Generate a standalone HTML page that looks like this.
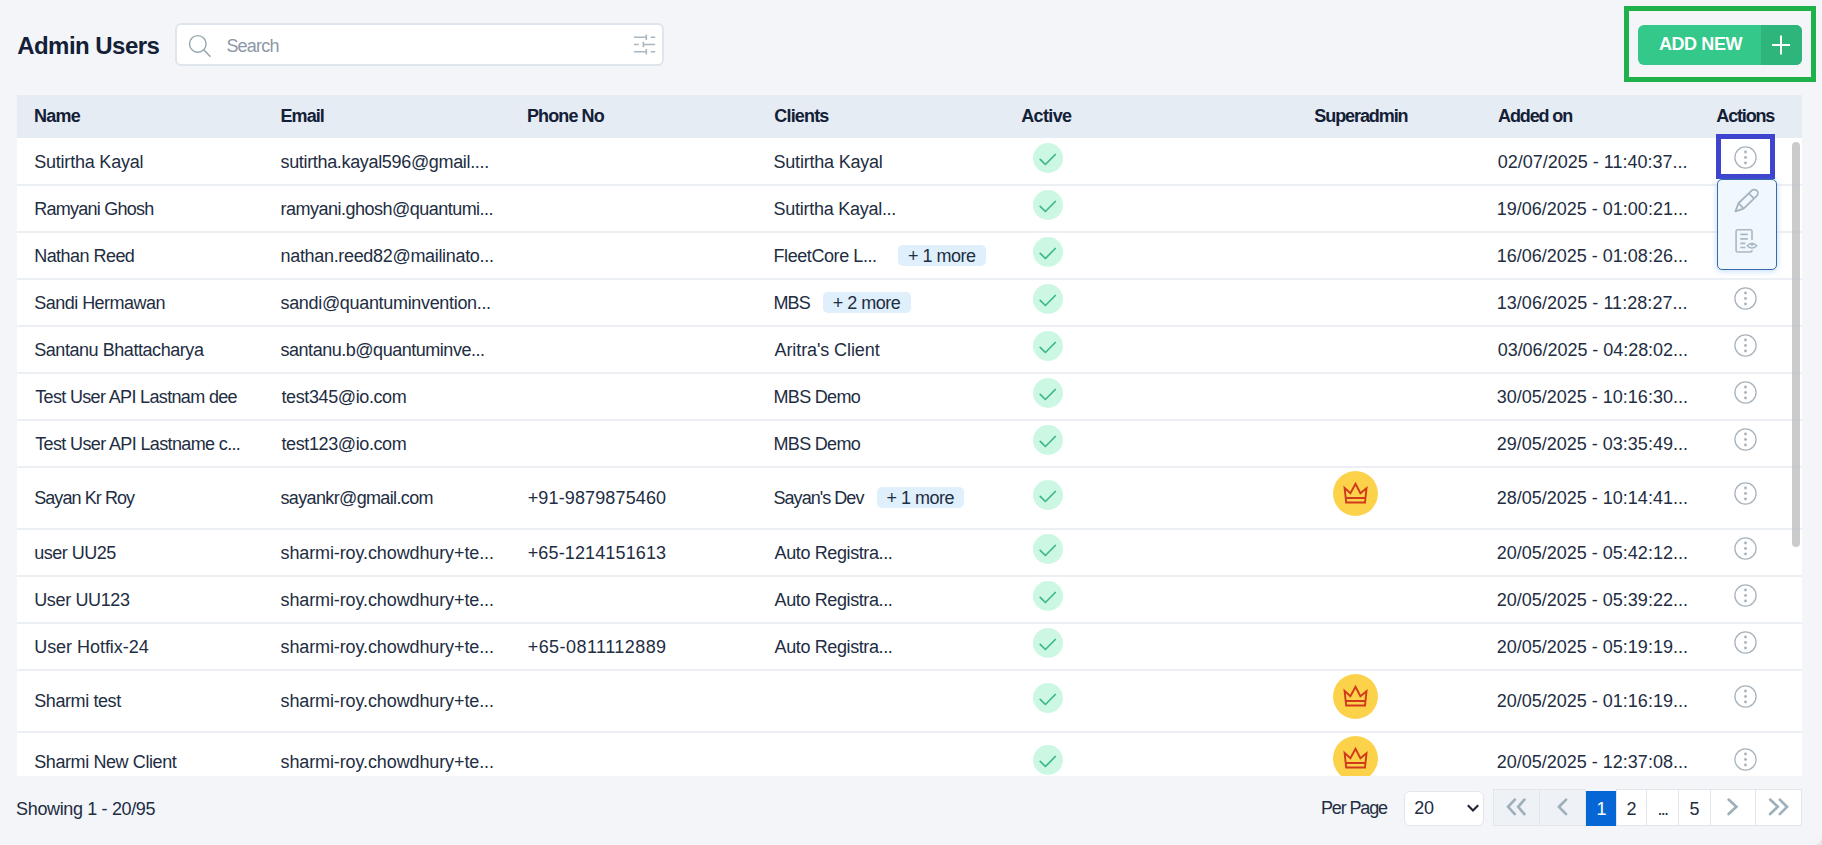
<!DOCTYPE html>
<html><head><meta charset="utf-8"><title>Admin Users</title>
<style>
html,body{margin:0;padding:0;width:1822px;height:845px;overflow:hidden;background:#f3f5f9;font-family:'Liberation Sans',sans-serif;}
.t{position:absolute;white-space:pre;line-height:30px;}
.abs{position:absolute;}
.search{position:absolute;left:175px;top:23px;width:489px;height:43px;box-sizing:border-box;border:2px solid #dfe5ec;border-radius:6px;background:#fff;}
.btn{position:absolute;left:1638px;top:24.5px;width:164px;height:40px;border-radius:6px;background:#34c88a;overflow:hidden;}
.btn .plus{position:absolute;right:0;top:0;width:41px;height:40px;background:#2db57b;}
.hl-green{position:absolute;left:1624px;top:6px;width:182px;height:66px;border:5px solid #1fb24a;}
.thead{position:absolute;left:17px;top:95px;width:1785px;height:43px;background:#e5ecf4;}
.tbody{position:absolute;left:17px;top:138px;width:1785px;height:638px;background:#fff;}
.rb{position:absolute;left:17px;width:1785px;height:2px;background:rgba(179,195,215,0.25);}
.chk{position:absolute;width:30px;height:30px;border-radius:50%;background:#ccf7e3;}
.chk svg,.crown svg,.kebab svg{position:absolute;left:0;top:0;}
.crown{position:absolute;width:45px;height:45px;border-radius:50%;background:#fdd24b;}
.kebab{position:absolute;width:23px;height:23px;}
.badge{position:absolute;background:#dff0fc;border-radius:5px;}
.scroll{position:absolute;left:1792px;top:141.5px;width:8px;height:405px;border-radius:4px;background:#cbcbcb;}
.hl-blue{position:absolute;left:1716px;top:134px;width:49px;height:35px;border:5px solid #3e44cd;}
.dd{position:absolute;left:1717px;top:178.5px;width:58px;height:89.5px;border:1.3px solid #3769ab;border-radius:5px;background:#f0f7fd;box-shadow:0 1px 6px rgba(80,150,240,0.35);}
.sel{position:absolute;left:1404px;top:791px;width:78px;height:33px;border:1px solid #e2e7ed;border-radius:6px;background:#fff;}
.pg{position:absolute;top:789px;height:37px;border:1px solid #e1e6ea;box-sizing:border-box;background:#fff;}
.pg.dis{background:#eef2f6;}
.pg.act{background:#0766d6;border-color:#0766d6;top:790.5px;height:35px;}

</style></head><body>
<div class="search"></div>
<svg class="abs" style="left:185px;top:31px" width="30" height="30" viewBox="0 0 30 30"><circle cx="12.8" cy="12.9" r="8.3" fill="none" stroke="#93a5ae" stroke-width="1.4"/><path d="M18.9 19 L25 25.3" stroke="#93a5ae" stroke-width="1.6" stroke-linecap="round"/></svg>
<svg class="abs" style="left:630px;top:30px" width="30" height="30" viewBox="0 0 30 30"><g stroke="#a8b7c1" stroke-width="1.6" fill="none"><path d="M4 7.2 H16.5 M20.7 7.2 H25.2 M16.3 4.5 V10"/><path d="M4 14.5 H8.7 M14 14.5 H25.2 M13.4 11.8 V17.3"/><path d="M4 21.8 H16.5 M20.7 21.8 H25.2 M16.3 19 V24.6"/></g></svg>
<div class="hl-green"></div>
<div class="btn"><div class="plus"></div></div>
<svg class="abs" style="left:1770px;top:34px" width="22" height="22" viewBox="0 0 22 22"><path d="M11 1.5 V20.5 M2 11 H20" stroke="#fff" stroke-width="2"/></svg>
<div class="thead"></div>
<div class="tbody"></div>
<div class="scroll"></div>

<div style="position:absolute;left:0;top:0;width:1822px;height:776px;overflow:hidden"><div class="chk" style="left:1033px;top:142.80px"><svg width="30" height="30" viewBox="0 0 30 30"><path d="M7.2 16.3 L12.4 21.5 L22.3 11.5" fill="none" stroke="#3bb984" stroke-width="1.7" stroke-linecap="round" stroke-linejoin="round"/></svg></div><div class="kebab" style="left:1734px;top:145.60px"><svg width="23" height="23" viewBox="0 0 23 23"><circle cx="11.5" cy="11.5" r="10.6" fill="none" stroke="#a9b4bd" stroke-width="1.3"/><circle cx="11.5" cy="6" r="1.45" fill="#a9b4bd"/><circle cx="11.5" cy="11.5" r="1.45" fill="#a9b4bd"/><circle cx="11.5" cy="17" r="1.45" fill="#a9b4bd"/></svg></div><div class="chk" style="left:1033px;top:190.27px"><svg width="30" height="30" viewBox="0 0 30 30"><path d="M7.2 16.3 L12.4 21.5 L22.3 11.5" fill="none" stroke="#3bb984" stroke-width="1.7" stroke-linecap="round" stroke-linejoin="round"/></svg></div><div class="badge" style="left:898px;top:244.90px;width:88px;height:21px"></div><div class="chk" style="left:1033px;top:237.20px"><svg width="30" height="30" viewBox="0 0 30 30"><path d="M7.2 16.3 L12.4 21.5 L22.3 11.5" fill="none" stroke="#3bb984" stroke-width="1.7" stroke-linecap="round" stroke-linejoin="round"/></svg></div><div class="badge" style="left:823.2px;top:291.83px;width:87.69999999999993px;height:21px"></div><div class="chk" style="left:1033px;top:284.13px"><svg width="30" height="30" viewBox="0 0 30 30"><path d="M7.2 16.3 L12.4 21.5 L22.3 11.5" fill="none" stroke="#3bb984" stroke-width="1.7" stroke-linecap="round" stroke-linejoin="round"/></svg></div><div class="kebab" style="left:1734px;top:286.93px"><svg width="23" height="23" viewBox="0 0 23 23"><circle cx="11.5" cy="11.5" r="10.6" fill="none" stroke="#a9b4bd" stroke-width="1.3"/><circle cx="11.5" cy="6" r="1.45" fill="#a9b4bd"/><circle cx="11.5" cy="11.5" r="1.45" fill="#a9b4bd"/><circle cx="11.5" cy="17" r="1.45" fill="#a9b4bd"/></svg></div><div class="chk" style="left:1033px;top:331.06px"><svg width="30" height="30" viewBox="0 0 30 30"><path d="M7.2 16.3 L12.4 21.5 L22.3 11.5" fill="none" stroke="#3bb984" stroke-width="1.7" stroke-linecap="round" stroke-linejoin="round"/></svg></div><div class="kebab" style="left:1734px;top:333.86px"><svg width="23" height="23" viewBox="0 0 23 23"><circle cx="11.5" cy="11.5" r="10.6" fill="none" stroke="#a9b4bd" stroke-width="1.3"/><circle cx="11.5" cy="6" r="1.45" fill="#a9b4bd"/><circle cx="11.5" cy="11.5" r="1.45" fill="#a9b4bd"/><circle cx="11.5" cy="17" r="1.45" fill="#a9b4bd"/></svg></div><div class="chk" style="left:1033px;top:377.99px"><svg width="30" height="30" viewBox="0 0 30 30"><path d="M7.2 16.3 L12.4 21.5 L22.3 11.5" fill="none" stroke="#3bb984" stroke-width="1.7" stroke-linecap="round" stroke-linejoin="round"/></svg></div><div class="kebab" style="left:1734px;top:380.79px"><svg width="23" height="23" viewBox="0 0 23 23"><circle cx="11.5" cy="11.5" r="10.6" fill="none" stroke="#a9b4bd" stroke-width="1.3"/><circle cx="11.5" cy="6" r="1.45" fill="#a9b4bd"/><circle cx="11.5" cy="11.5" r="1.45" fill="#a9b4bd"/><circle cx="11.5" cy="17" r="1.45" fill="#a9b4bd"/></svg></div><div class="chk" style="left:1033px;top:424.92px"><svg width="30" height="30" viewBox="0 0 30 30"><path d="M7.2 16.3 L12.4 21.5 L22.3 11.5" fill="none" stroke="#3bb984" stroke-width="1.7" stroke-linecap="round" stroke-linejoin="round"/></svg></div><div class="kebab" style="left:1734px;top:427.72px"><svg width="23" height="23" viewBox="0 0 23 23"><circle cx="11.5" cy="11.5" r="10.6" fill="none" stroke="#a9b4bd" stroke-width="1.3"/><circle cx="11.5" cy="6" r="1.45" fill="#a9b4bd"/><circle cx="11.5" cy="11.5" r="1.45" fill="#a9b4bd"/><circle cx="11.5" cy="17" r="1.45" fill="#a9b4bd"/></svg></div><div class="badge" style="left:877.3px;top:487.29px;width:87.10000000000002px;height:21px"></div><div class="chk" style="left:1033px;top:479.59px"><svg width="30" height="30" viewBox="0 0 30 30"><path d="M7.2 16.3 L12.4 21.5 L22.3 11.5" fill="none" stroke="#3bb984" stroke-width="1.7" stroke-linecap="round" stroke-linejoin="round"/></svg></div><div class="crown" style="left:1333px;top:471.09px"><svg width="45" height="45" viewBox="0 0 45 45"><path d="M11.6 17 L17.4 22.3 L22.5 12.7 L27.4 22.3 L33.5 17.3 L32 31.5 L13.2 31.5 Z M13 27 L32.3 27" fill="none" stroke="#d0391c" stroke-width="1.9" stroke-linejoin="miter"/></svg></div><div class="kebab" style="left:1734px;top:482.39px"><svg width="23" height="23" viewBox="0 0 23 23"><circle cx="11.5" cy="11.5" r="10.6" fill="none" stroke="#a9b4bd" stroke-width="1.3"/><circle cx="11.5" cy="6" r="1.45" fill="#a9b4bd"/><circle cx="11.5" cy="11.5" r="1.45" fill="#a9b4bd"/><circle cx="11.5" cy="17" r="1.45" fill="#a9b4bd"/></svg></div><div class="chk" style="left:1033px;top:534.26px"><svg width="30" height="30" viewBox="0 0 30 30"><path d="M7.2 16.3 L12.4 21.5 L22.3 11.5" fill="none" stroke="#3bb984" stroke-width="1.7" stroke-linecap="round" stroke-linejoin="round"/></svg></div><div class="kebab" style="left:1734px;top:537.06px"><svg width="23" height="23" viewBox="0 0 23 23"><circle cx="11.5" cy="11.5" r="10.6" fill="none" stroke="#a9b4bd" stroke-width="1.3"/><circle cx="11.5" cy="6" r="1.45" fill="#a9b4bd"/><circle cx="11.5" cy="11.5" r="1.45" fill="#a9b4bd"/><circle cx="11.5" cy="17" r="1.45" fill="#a9b4bd"/></svg></div><div class="chk" style="left:1033px;top:581.19px"><svg width="30" height="30" viewBox="0 0 30 30"><path d="M7.2 16.3 L12.4 21.5 L22.3 11.5" fill="none" stroke="#3bb984" stroke-width="1.7" stroke-linecap="round" stroke-linejoin="round"/></svg></div><div class="kebab" style="left:1734px;top:583.99px"><svg width="23" height="23" viewBox="0 0 23 23"><circle cx="11.5" cy="11.5" r="10.6" fill="none" stroke="#a9b4bd" stroke-width="1.3"/><circle cx="11.5" cy="6" r="1.45" fill="#a9b4bd"/><circle cx="11.5" cy="11.5" r="1.45" fill="#a9b4bd"/><circle cx="11.5" cy="17" r="1.45" fill="#a9b4bd"/></svg></div><div class="chk" style="left:1033px;top:628.12px"><svg width="30" height="30" viewBox="0 0 30 30"><path d="M7.2 16.3 L12.4 21.5 L22.3 11.5" fill="none" stroke="#3bb984" stroke-width="1.7" stroke-linecap="round" stroke-linejoin="round"/></svg></div><div class="kebab" style="left:1734px;top:630.92px"><svg width="23" height="23" viewBox="0 0 23 23"><circle cx="11.5" cy="11.5" r="10.6" fill="none" stroke="#a9b4bd" stroke-width="1.3"/><circle cx="11.5" cy="6" r="1.45" fill="#a9b4bd"/><circle cx="11.5" cy="11.5" r="1.45" fill="#a9b4bd"/><circle cx="11.5" cy="17" r="1.45" fill="#a9b4bd"/></svg></div><div class="chk" style="left:1033px;top:682.69px"><svg width="30" height="30" viewBox="0 0 30 30"><path d="M7.2 16.3 L12.4 21.5 L22.3 11.5" fill="none" stroke="#3bb984" stroke-width="1.7" stroke-linecap="round" stroke-linejoin="round"/></svg></div><div class="crown" style="left:1333px;top:674.19px"><svg width="45" height="45" viewBox="0 0 45 45"><path d="M11.6 17 L17.4 22.3 L22.5 12.7 L27.4 22.3 L33.5 17.3 L32 31.5 L13.2 31.5 Z M13 27 L32.3 27" fill="none" stroke="#d0391c" stroke-width="1.9" stroke-linejoin="miter"/></svg></div><div class="kebab" style="left:1734px;top:685.49px"><svg width="23" height="23" viewBox="0 0 23 23"><circle cx="11.5" cy="11.5" r="10.6" fill="none" stroke="#a9b4bd" stroke-width="1.3"/><circle cx="11.5" cy="6" r="1.45" fill="#a9b4bd"/><circle cx="11.5" cy="11.5" r="1.45" fill="#a9b4bd"/><circle cx="11.5" cy="17" r="1.45" fill="#a9b4bd"/></svg></div><div class="chk" style="left:1033px;top:744.89px"><svg width="30" height="30" viewBox="0 0 30 30"><path d="M7.2 16.3 L12.4 21.5 L22.3 11.5" fill="none" stroke="#3bb984" stroke-width="1.7" stroke-linecap="round" stroke-linejoin="round"/></svg></div><div class="crown" style="left:1333px;top:736.39px"><svg width="45" height="45" viewBox="0 0 45 45"><path d="M11.6 17 L17.4 22.3 L22.5 12.7 L27.4 22.3 L33.5 17.3 L32 31.5 L13.2 31.5 Z M13 27 L32.3 27" fill="none" stroke="#d0391c" stroke-width="1.9" stroke-linejoin="miter"/></svg></div><div class="kebab" style="left:1734px;top:747.69px"><svg width="23" height="23" viewBox="0 0 23 23"><circle cx="11.5" cy="11.5" r="10.6" fill="none" stroke="#a9b4bd" stroke-width="1.3"/><circle cx="11.5" cy="6" r="1.45" fill="#a9b4bd"/><circle cx="11.5" cy="11.5" r="1.45" fill="#a9b4bd"/><circle cx="11.5" cy="17" r="1.45" fill="#a9b4bd"/></svg></div><div class="rb" style="top:184.00px"></div><div class="rb" style="top:230.93px"></div><div class="rb" style="top:277.86px"></div><div class="rb" style="top:324.79px"></div><div class="rb" style="top:371.72px"></div><div class="rb" style="top:418.65px"></div><div class="rb" style="top:465.58px"></div><div class="rb" style="top:528.00px"></div><div class="rb" style="top:574.93px"></div><div class="rb" style="top:621.86px"></div><div class="rb" style="top:668.79px"></div><div class="rb" style="top:730.99px"></div></div>
<div class="hl-blue"></div>
<div class="dd"></div>
<svg class="abs" style="left:1730px;top:186px" width="32" height="32" viewBox="0 0 32 32"><g fill="none" stroke="#a5b3bd" stroke-width="1.75" stroke-linejoin="round"><path d="M5.40 25.40 L8.51 17.25 L21.61 4.61 A3.7 3.7 0 0 1 26.75 9.94 L13.65 22.58 Z M8.51 17.25 L13.65 22.58 M18.87 7.25 L24.01 12.57"/></g></svg>
<svg class="abs" style="left:1730px;top:225px" width="32" height="32" viewBox="0 0 32 32"><g fill="none" stroke="#a9b8c2" stroke-width="1.6"><path d="M22 14.9 V6.3 Q22 4.7 20.4 4.7 H7.7 Q6.1 4.7 6.1 6.3 V25.4 Q6.1 27 7.7 27 H20.4 Q22 27 22 25.4 V25"/><path d="M10.3 9.3 H17.8 M10.3 13.8 H17.8 M10.3 18.3 H15.4 M10.3 22.5 H15.4" stroke-width="1.7"/><path d="M17.2 20.7 Q22 15.9 26.8 20.7 Q22 25.5 17.2 20.7 Z" stroke-width="1.4"/></g><path d="M19.9 19.3 Q22 18.2 24.1 19.3 L22 21.3 Z" fill="#a9b8c2"/></svg>
<div class="sel"></div>
<svg class="abs" style="left:1466px;top:802px" width="14" height="12" viewBox="0 0 14 12"><path d="M1.8 3.2 L7 8.4 L12.2 3.2" fill="none" stroke="#1b2433" stroke-width="2.1"/></svg>
<div class="pg dis" style="left:1493px;width:47px"></div>
<div class="pg dis" style="left:1539px;width:47px"></div>
<div class="pg act" style="left:1586px;width:30px"></div>
<div class="pg" style="left:1615.5px;width:31.5px"></div>
<div class="pg" style="left:1646px;width:33px"></div>
<div class="pg" style="left:1678px;width:32.5px"></div>
<div class="pg" style="left:1709.5px;width:46.5px"></div>
<div class="pg" style="left:1755px;width:47px"></div>
<svg class="abs" style="left:1500px;top:793px" width="32" height="28" viewBox="0 0 32 28"><g fill="none" stroke="#9fb0bb" stroke-width="2.7" stroke-linecap="round"><path d="M14.8 6.6 L8.1 13.85 L14.8 21.1 M24.4 6.6 L18.2 13.85 L24.4 21.1"/></g></svg>
<svg class="abs" style="left:1548px;top:793px" width="28" height="28" viewBox="0 0 28 28"><path d="M18.1 6.6 L11 13.85 L18.1 21.1" fill="none" stroke="#9fb0bb" stroke-width="2.7" stroke-linecap="round"/></svg>
<svg class="abs" style="left:1719px;top:793px" width="28" height="28" viewBox="0 0 28 28"><path d="M9.6 6.6 L17.4 13.85 L9.6 21.1" fill="none" stroke="#9fb0bb" stroke-width="2.7" stroke-linecap="round"/></svg>
<svg class="abs" style="left:1763px;top:793px" width="32" height="28" viewBox="0 0 32 28"><g fill="none" stroke="#9fb0bb" stroke-width="2.7" stroke-linecap="round"><path d="M7.1 6.6 L14.8 13.85 L7.1 21.1 M16.8 6.6 L24 13.85 L16.8 21.1"/></g></svg>
<div class="abs" style="left:1813px;top:836px;width:9px;height:9px;background:radial-gradient(circle at 0 0,#f3f5f9 8.3px,#e7e9ec 9.3px)"></div>

<span class="t" style="left:17.20px;top:31.40px;font-size:24px;font-weight:700;color:#132036;letter-spacing:-0.540px">Admin Users</span><span class="t" style="left:226.40px;top:30.70px;font-size:18px;font-weight:400;color:#8d97a7;letter-spacing:-0.800px">Search</span><span class="t" style="left:1658.90px;top:29.20px;font-size:18px;font-weight:700;color:#ffffff;letter-spacing:-0.383px">ADD NEW</span><span class="t" style="left:33.90px;top:101.40px;font-size:18px;font-weight:700;color:#132036;letter-spacing:-0.700px">Name</span><span class="t" style="left:280.50px;top:101.40px;font-size:18px;font-weight:700;color:#132036;letter-spacing:-0.925px">Email</span><span class="t" style="left:527.00px;top:101.40px;font-size:18px;font-weight:700;color:#132036;letter-spacing:-0.900px">Phone No</span><span class="t" style="left:774.30px;top:101.40px;font-size:18px;font-weight:700;color:#132036;letter-spacing:-0.833px">Clients</span><span class="t" style="left:1021.20px;top:101.40px;font-size:18px;font-weight:700;color:#132036;letter-spacing:-0.640px">Active</span><span class="t" style="left:1314.30px;top:101.40px;font-size:18px;font-weight:700;color:#132036;letter-spacing:-1.078px">Superadmin</span><span class="t" style="left:1498.10px;top:101.40px;font-size:18px;font-weight:700;color:#132036;letter-spacing:-1.129px">Added on</span><span class="t" style="left:1716.30px;top:101.40px;font-size:18px;font-weight:700;color:#132036;letter-spacing:-1.167px">Actions</span><span class="t" style="left:34.20px;top:146.50px;font-size:18px;font-weight:400;color:#222d42;letter-spacing:-0.208px">Sutirtha Kayal</span><span class="t" style="left:280.50px;top:146.50px;font-size:18px;font-weight:400;color:#222d42;letter-spacing:-0.335px">sutirtha.kayal596@gmail....</span><span class="t" style="left:773.50px;top:146.50px;font-size:18px;font-weight:400;color:#222d42;letter-spacing:-0.208px">Sutirtha Kayal</span><span class="t" style="left:1497.70px;top:146.50px;font-size:18px;font-weight:400;color:#222d42;letter-spacing:0.004px">02/07/2025 - 11:40:37...</span><span class="t" style="left:34.20px;top:193.97px;font-size:18px;font-weight:400;color:#222d42;letter-spacing:-0.742px">Ramyani Ghosh</span><span class="t" style="left:280.50px;top:193.97px;font-size:18px;font-weight:400;color:#222d42;letter-spacing:-0.513px">ramyani.ghosh@quantumi...</span><span class="t" style="left:773.50px;top:193.97px;font-size:18px;font-weight:400;color:#222d42;letter-spacing:-0.263px">Sutirtha Kayal...</span><span class="t" style="left:1496.70px;top:193.97px;font-size:18px;font-weight:400;color:#222d42;letter-spacing:0.004px">19/06/2025 - 01:00:21...</span><span class="t" style="left:34.20px;top:240.89px;font-size:18px;font-weight:400;color:#222d42;letter-spacing:-0.540px">Nathan Reed</span><span class="t" style="left:280.50px;top:240.89px;font-size:18px;font-weight:400;color:#222d42;letter-spacing:-0.320px">nathan.reed82@mailinato...</span><span class="t" style="left:773.50px;top:240.89px;font-size:18px;font-weight:400;color:#222d42;letter-spacing:-0.423px">FleetCore L...</span><span class="t" style="left:907.90px;top:240.89px;font-size:18px;font-weight:400;color:#222d42;letter-spacing:-0.500px">+ 1 more</span><span class="t" style="left:1496.70px;top:240.89px;font-size:18px;font-weight:400;color:#222d42;letter-spacing:0.004px">16/06/2025 - 01:08:26...</span><span class="t" style="left:34.20px;top:287.83px;font-size:18px;font-weight:400;color:#222d42;letter-spacing:-0.515px">Sandi Hermawan</span><span class="t" style="left:280.50px;top:287.83px;font-size:18px;font-weight:400;color:#222d42;letter-spacing:-0.325px">sandi@quantuminvention...</span><span class="t" style="left:773.50px;top:287.83px;font-size:18px;font-weight:400;color:#222d42;letter-spacing:-0.900px">MBS</span><span class="t" style="left:832.80px;top:287.83px;font-size:18px;font-weight:400;color:#222d42;letter-spacing:-0.500px">+ 2 more</span><span class="t" style="left:1496.70px;top:287.83px;font-size:18px;font-weight:400;color:#222d42;letter-spacing:0.048px">13/06/2025 - 11:28:27...</span><span class="t" style="left:34.20px;top:334.75px;font-size:18px;font-weight:400;color:#222d42;letter-spacing:-0.442px">Santanu Bhattacharya</span><span class="t" style="left:280.50px;top:334.75px;font-size:18px;font-weight:400;color:#222d42;letter-spacing:-0.474px">santanu.b@quantuminve...</span><span class="t" style="left:774.50px;top:334.75px;font-size:18px;font-weight:400;color:#222d42;letter-spacing:-0.093px">Aritra&#x27;s Client</span><span class="t" style="left:1497.70px;top:334.75px;font-size:18px;font-weight:400;color:#222d42;letter-spacing:-0.039px">03/06/2025 - 04:28:02...</span><span class="t" style="left:35.20px;top:381.69px;font-size:18px;font-weight:400;color:#222d42;letter-spacing:-0.654px">Test User API Lastnam dee</span><span class="t" style="left:281.50px;top:381.69px;font-size:18px;font-weight:400;color:#222d42;letter-spacing:-0.392px">test345@io.com</span><span class="t" style="left:773.50px;top:381.69px;font-size:18px;font-weight:400;color:#222d42;letter-spacing:-0.686px">MBS Demo</span><span class="t" style="left:1496.70px;top:381.69px;font-size:18px;font-weight:400;color:#222d42;letter-spacing:0.004px">30/05/2025 - 10:16:30...</span><span class="t" style="left:35.20px;top:428.62px;font-size:18px;font-weight:400;color:#222d42;letter-spacing:-0.631px">Test User API Lastname c...</span><span class="t" style="left:281.50px;top:428.62px;font-size:18px;font-weight:400;color:#222d42;letter-spacing:-0.392px">test123@io.com</span><span class="t" style="left:773.50px;top:428.62px;font-size:18px;font-weight:400;color:#222d42;letter-spacing:-0.686px">MBS Demo</span><span class="t" style="left:1496.70px;top:428.62px;font-size:18px;font-weight:400;color:#222d42;letter-spacing:0.004px">29/05/2025 - 03:35:49...</span><span class="t" style="left:34.20px;top:483.29px;font-size:18px;font-weight:400;color:#222d42;letter-spacing:-0.927px">Sayan Kr Roy</span><span class="t" style="left:280.50px;top:483.29px;font-size:18px;font-weight:400;color:#222d42;letter-spacing:-0.644px">sayankr@gmail.com</span><span class="t" style="left:527.70px;top:483.29px;font-size:18px;font-weight:400;color:#222d42;letter-spacing:0.138px">+91-9879875460</span><span class="t" style="left:773.50px;top:483.29px;font-size:18px;font-weight:400;color:#222d42;letter-spacing:-0.960px">Sayan&#x27;s Dev</span><span class="t" style="left:886.50px;top:483.29px;font-size:18px;font-weight:400;color:#222d42;letter-spacing:-0.500px">+ 1 more</span><span class="t" style="left:1496.70px;top:483.29px;font-size:18px;font-weight:400;color:#222d42;letter-spacing:0.004px">28/05/2025 - 10:14:41...</span><span class="t" style="left:34.20px;top:537.96px;font-size:18px;font-weight:400;color:#222d42;letter-spacing:-0.500px">user UU25</span><span class="t" style="left:280.50px;top:537.96px;font-size:18px;font-weight:400;color:#222d42;letter-spacing:-0.112px">sharmi-roy.chowdhury+te...</span><span class="t" style="left:527.70px;top:537.96px;font-size:18px;font-weight:400;color:#222d42;letter-spacing:0.138px">+65-1214151613</span><span class="t" style="left:774.50px;top:537.96px;font-size:18px;font-weight:400;color:#222d42;letter-spacing:-0.380px">Auto Registra...</span><span class="t" style="left:1496.70px;top:537.96px;font-size:18px;font-weight:400;color:#222d42;letter-spacing:0.004px">20/05/2025 - 05:42:12...</span><span class="t" style="left:34.20px;top:584.89px;font-size:18px;font-weight:400;color:#222d42;letter-spacing:-0.356px">User UU123</span><span class="t" style="left:280.50px;top:584.89px;font-size:18px;font-weight:400;color:#222d42;letter-spacing:-0.112px">sharmi-roy.chowdhury+te...</span><span class="t" style="left:774.50px;top:584.89px;font-size:18px;font-weight:400;color:#222d42;letter-spacing:-0.380px">Auto Registra...</span><span class="t" style="left:1496.70px;top:584.89px;font-size:18px;font-weight:400;color:#222d42;letter-spacing:0.004px">20/05/2025 - 05:39:22...</span><span class="t" style="left:34.20px;top:631.82px;font-size:18px;font-weight:400;color:#222d42;letter-spacing:-0.038px">User Hotfix-24</span><span class="t" style="left:280.50px;top:631.82px;font-size:18px;font-weight:400;color:#222d42;letter-spacing:-0.112px">sharmi-roy.chowdhury+te...</span><span class="t" style="left:527.70px;top:631.82px;font-size:18px;font-weight:400;color:#222d42;letter-spacing:0.446px">+65-0811112889</span><span class="t" style="left:774.50px;top:631.82px;font-size:18px;font-weight:400;color:#222d42;letter-spacing:-0.380px">Auto Registra...</span><span class="t" style="left:1496.70px;top:631.82px;font-size:18px;font-weight:400;color:#222d42;letter-spacing:0.004px">20/05/2025 - 05:19:19...</span><span class="t" style="left:34.20px;top:686.39px;font-size:18px;font-weight:400;color:#222d42;letter-spacing:-0.400px">Sharmi test</span><span class="t" style="left:280.50px;top:686.39px;font-size:18px;font-weight:400;color:#222d42;letter-spacing:-0.112px">sharmi-roy.chowdhury+te...</span><span class="t" style="left:1496.70px;top:686.39px;font-size:18px;font-weight:400;color:#222d42;letter-spacing:0.004px">20/05/2025 - 01:16:19...</span><span class="t" style="left:34.20px;top:747.19px;font-size:18px;font-weight:400;color:#222d42;letter-spacing:-0.400px">Sharmi New Client</span><span class="t" style="left:280.50px;top:747.19px;font-size:18px;font-weight:400;color:#222d42;letter-spacing:-0.112px">sharmi-roy.chowdhury+te...</span><span class="t" style="left:1496.70px;top:747.19px;font-size:18px;font-weight:400;color:#222d42;letter-spacing:0.004px">20/05/2025 - 12:37:08...</span><span class="t" style="left:16.10px;top:793.50px;font-size:18px;font-weight:400;color:#222d42;letter-spacing:-0.356px">Showing 1 - 20/95</span><span class="t" style="left:1320.90px;top:792.60px;font-size:18px;font-weight:400;color:#222d42;letter-spacing:-1.129px">Per Page</span><span class="t" style="left:1414.20px;top:793.30px;font-size:18px;font-weight:400;color:#222d42;letter-spacing:-0.200px">20</span><span class="t" style="left:1596.60px;top:794.00px;font-size:18px;font-weight:400;color:#ffffff;letter-spacing:0.000px">1</span><span class="t" style="left:1626.40px;top:793.60px;font-size:18px;font-weight:400;color:#222d42;letter-spacing:0.000px">2</span><span class="t" style="left:1657.50px;top:793.60px;font-size:18px;font-weight:400;color:#222d42;letter-spacing:-1.750px">...</span><span class="t" style="left:1689.40px;top:793.60px;font-size:18px;font-weight:400;color:#222d42;letter-spacing:0.000px">5</span>
</body></html>
